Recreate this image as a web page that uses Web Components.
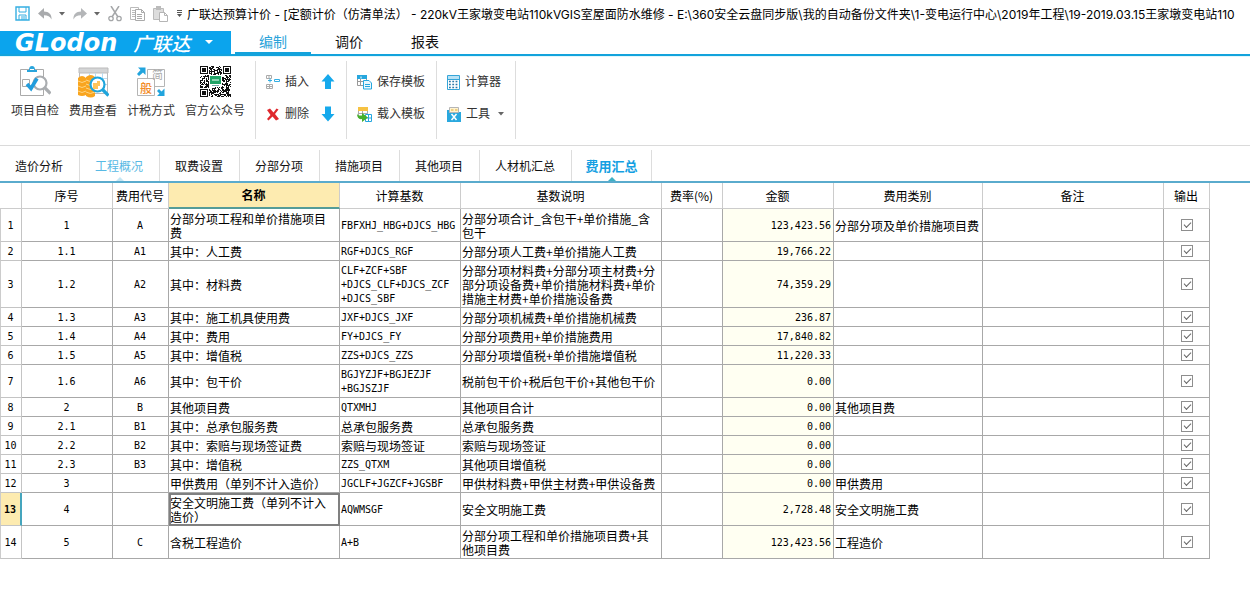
<!DOCTYPE html>
<html lang="zh-CN">
<head>
<meta charset="utf-8">
<title>广联达预算计价</title>
<style>
html,body{margin:0;background:#fff}
body{font:12px/14px "Open Sans","Noto Sans CJK SC",sans-serif;color:#111;overflow-x:hidden}
</style>
</head>
<body>
<gc-app></gc-app>
<script>
const ICONS = {
save:[15,15,`<path d="M1 1h13v13H1z" fill="none" stroke="#35aee2" stroke-width="1.4"/><path d="M4 1v5h7V1M4 14V9h7v5M6 11h4M6 13h4" fill="none" stroke="#35aee2"/>`],
undo:[14,12,`<path d="M6 0v3.500c5 0 8 3 7.500 8C12 8.500 10 7.300 6 7.300v3.500L0 5.400z" fill="#a9abad"/>`],
redo:[14,12,`<path d="M8 0v3.500C3 3.500 0 6.500.5 11.500 2 8.500 4 7.300 8 7.300v3.500l6-5.400z" fill="#b4b6b8"/>`],
caret:[6,4,`<path d="M0 0h6L3 3.500z" fill="#666"/>`],
more:[7,8,`<path d="M1 .5h5M1 2.500h5" stroke="#555"/><path d="M1 4h5L3.500 7z" fill="#555"/>`],
wcaret:[8,5,`<path d="M0 0h8L4 4z" fill="#fff"/>`],
cut:[14,16,`<path d="M3 0l7 11M11 0L4 11" stroke="#a5a7a9" stroke-width="1.500"/><circle cx="3" cy="12.500" r="2.200" fill="none" stroke="#a5a7a9" stroke-width="1.300"/><circle cx="11" cy="12.500" r="2.200" fill="none" stroke="#a5a7a9" stroke-width="1.300"/>`],
copy:[15,14,`<path d="M8.500 2.500V.5h-8v12h5" fill="none" stroke="#bbb"/><path d="M2 3.500h3M2 5.500h3M2 7.500h3M2 9.500h3" stroke="#bbb"/><path d="M5.500 2.500h6l3 3v8h-9z" fill="#fff" stroke="#aaa"/><path d="M11.500 2.500v3h3M7 7.500h5M7 9.500h5M7 11.500h5" fill="none" stroke="#aaa"/>`],
paste:[15,16,`<path d="M.5 2.500h10v11H.5z" fill="#ddd" stroke="#bbb"/><path d="M3 0h5v4H3z" fill="#bbb"/><path d="M6.500 6.500h5l3 3v6h-8z" fill="#fff" stroke="#b5b5b5"/><path d="M11.500 6.500v3h3" fill="none" stroke="#b5b5b5"/>`],
check:[32,32,`<path d="M1.500 3.500h23v26h-23z" fill="#fff" stroke="#aaa"/><path d="M8 4h2q0-4 3-4t3 4h2v2H8z" fill="#2aa5dc"/><path d="M11 3.500h4" stroke="#fff"/><path d="M3.500 13.500h7v7h-7z" fill="none" stroke="#aaa"/><circle cx="21" cy="17" r="6.500" fill="#fff" stroke="#aaadb0" stroke-width="2.200"/><path d="M25.500 21.500l6 6" stroke="#aaadb0" stroke-width="3.200"/><path d="M8 18l4 4.500 6-10" fill="none" stroke="#219ddd" stroke-width="3.600"/>`],
fee:[32,32,`<path d="M2.500 2.500h28v25h-28z" fill="#fff" stroke="#bbb"/><path d="M2 2h29v5H2z" fill="#d4d5d6" stroke="#bbb"/><path d="M3 12.500h27M3 18.500h27M12.500 7v17M18.500 7v17M25.500 7v17" stroke="#bbdcf0"/><path d="M1 12q4-4 8 0v17q-4 2-8 0z" fill="#f9a51f"/><path d="M9 11q5-4 9 0v19q-4 3-9 0z" fill="#f9a51f"/><path d="M1 15q4 3 8 0M1 20q4 3 8 0M1 25q4 3 8 0M9 14q4 3 9 0M9 18q4 3 9 0M9 22q4 3 9 0M9 26q4 3 9 0" fill="none" stroke="#ffd584"/><circle cx="20.500" cy="18.500" r="7" fill="#fff" stroke="#1ea5dc" stroke-width="2.200"/><path d="M16 17h4v-2h3v5h-2v3h-5z" fill="#ffc45a"/><path d="M25.500 23.500l6 6" stroke="#1ea5dc" stroke-width="3.200"/>`],
tax:[32,32,`<path d="M12.500 3.500h17v17h-17z" fill="#fff" stroke="#b5b5b5"/><path d="M2.500 12.500h17v17h-17z" fill="#fff" stroke="#b5b5b5"/><text x="17" y="13" font-size="11" fill="#aaa">简</text><text x="5" y="27" font-size="12" font-weight="500" fill="#f28c28">般</text><path d="M3 1.500h7.500V9L8 6.500 4 10 2 8l3.500-4zM29.500 30H22l2.500-2.500L22 25l2-2 2.500 2.500 3-3z" fill="#21a4dd"/>`],
qr:[31,32,''],
insert:[14,14,`<path d="M.5.5h5v3h-5zM3 .5v3M.5 9.500h6v4h-6zM3.500 9.500v4M.5 11.500h6" fill="none" stroke="#aaa"/><path d="M8.500 4.500h5v2h-5z" fill="none" stroke="#35aee2"/><path d="M2 5.500h4M4 3.500v4" stroke="#35aee2"/>`],
del:[14,13,`<path d="M1 2l3-1.500 3.500 4 3-4 2 1-3.500 4.500 4 5-3 1.500-3.500-4-4 4-1.500-1.500L4.500 7z" fill="#df282d"/>`],
up:[14,16,`<path d="M7 0l6.500 7.500H10V15H4V7.500H.5z" fill="#16a9ec"/>`],
down:[14,16,`<path d="M7 15.500l6.500-7.500H10V.5H4V8H.5z" fill="#16a9ec"/>`],
tsave:[15,15,`<path d="M.5.5h9v10h-9zM3.500 1v9.500M.5 6.500h9" fill="#fff" stroke="#999"/><path d="M0 0h10v4H0z" fill="#26a7de"/><path d="M4 1.500v2" stroke="#fff"/><path d="M6.500 5.500h5.500l2.500 2.500v6h-8z" fill="#eaf7fd" stroke="#26a7de"/><path d="M8 9.500h5M8 11.500h5" stroke="#26a7de"/>`],
tload:[15,15,`<path d="M1.500.5h9v10h-9zM5.500 1v9.500M1.500 6.500h9" fill="#fff" stroke="#aaa"/><path d="M1 0h10v4H1z" fill="#f6c243"/><path d="M8.500 7.500h6v7h-6zM8.500 11h6M11.500 8v6" fill="#fff" stroke="#26a7de"/><path d="M0 6q0 3 5 2.500V6l6 4.500-6 4.500v-3Q0 13 0 6z" fill="#45b02b"/>`],
calc:[13,15,`<path d="M.5.5h12v14H.5z" fill="#fff" stroke="#35a5d8"/><path d="M1 1h11v3H1z" fill="#b9e2f5"/><path d="M1 4.500h11" stroke="#35a5d8"/><path d="M2 6.500h9M2 9.500h9M2 12.500h9" stroke="#2b78a8" stroke-width="1.300" stroke-dasharray="1.800 1.500"/>`],
tools:[14,15,`<path d="M0 3h2v2h12v10H0z" fill="#2aa8de"/><path d="M2.500.5h9v5h-9z" fill="#fff3cf" stroke="#b5b5b5"/><path d="M4 3h2.500M8 3h2.500" stroke="#d9a93a"/><path d="M4.500 7l5 6M9.500 7l-5 6" stroke="#fff" stroke-width="1.500"/>`]
};
/* QR code: three finder squares, scattered modules, green badge in the centre */
ICONS.qr[2] = (() => {
  let d = '', s = 7;
  const n = 31, finder = (x, y) => (x < 9 && y < 9) || (x > 21 && y < 9) || (x < 9 && y > 21);
  for (let y = 0; y < n; y++) for (let x = 0; x < n; x++) {
    s = (s * 1103515245 + 12345) % 2147483648;
    if (!finder(x, y) && (s >> 16) % 100 < 58) d += `M${x} ${y}h1v1h-1z`;
  }
  const f = (x, y) => `<path d="M${x} ${y}h8v8h-8z" fill="#111"/><path d="M${x+1} ${y+1}h6v6h-6z" fill="#fff"/><path d="M${x+2} ${y+2}h4v4h-4z" fill="#111"/>`;
  return `<g shape-rendering="crispEdges"><path d="${d}" fill="#111"/>${f(0,0)}${f(23,0)}${f(0,23)}<path d="M9 9h13v12H9z" fill="#fff"/><path d="M10 10h11v8H10z" fill="#20a366"/><path d="M12 13h7v2h-7z" fill="#8bd3b0"/><path d="M12 19h7v1h-7z" fill="#7aa"/></g>`;
})();

const mkIcon = (name) => { const i = document.createElement('gc-icon'); i.setAttribute('name', name); return i; };

const define = (name, html, setup) => customElements.define(name, class extends HTMLElement {
  constructor() {
    super();
    const t = document.createElement('template');
    t.innerHTML = html;
    this.attachShadow({ mode: 'open' }).append(t.content.cloneNode(true));
  }
  connectedCallback() { if (setup && !this.ready) { this.ready = true; setup(this, this.shadowRoot); } }
});

define('gc-icon', `<style>:host{display:inline-flex;flex:none}svg{display:block;font-family:"Noto Sans CJK SC",sans-serif}</style><span></span>`, (el, r) => {
  const [w, h, body] = ICONS[el.getAttribute('name')];
  r.querySelector('span').innerHTML = `<svg width="${w}" height="${h}" viewBox="0 0 ${w} ${h}" aria-hidden="true">${body}</svg>`;
});

const RESET = `button{all:unset;box-sizing:border-box;display:flex;align-items:center;cursor:default;white-space:nowrap}button:focus-visible{outline:1px dotted #16a9ec}`;

define('gc-titlebar', `<style>${RESET}
:host{display:flex;align-items:center;height:30px;box-sizing:border-box;padding:0 0 3px 15px;overflow:hidden}
.tools{display:flex;align-items:center;gap:8px;flex:none}
.split{gap:7px}
h1{font:12px/18px Inter,"Noto Sans CJK SC",sans-serif;color:#000;margin:2px 0 0 4px;white-space:nowrap}
</style>
<div class="tools">
<button aria-label="保存"><gc-icon name="save"></gc-icon></button>
<button class="split" aria-label="撤销"><gc-icon name="undo"></gc-icon><gc-icon name="caret"></gc-icon></button>
<button class="split" aria-label="恢复"><gc-icon name="redo"></gc-icon><gc-icon name="caret"></gc-icon></button>
<button aria-label="剪切"><gc-icon name="cut"></gc-icon></button>
<button aria-label="复制"><gc-icon name="copy"></gc-icon></button>
<button aria-label="粘贴"><gc-icon name="paste"></gc-icon></button>
<button aria-label="更多"><gc-icon name="more"></gc-icon></button>
</div><h1><slot></slot></h1>`);

define('gc-brand', `<style>${RESET}
:host{display:block;flex:none;background:#0ba4ed;color:#fff}
button{width:231px;height:23px;padding:0 18px 0 15px}
b{font:italic bold 24px/23px "DejaVu Sans",sans-serif;padding-top:2px}
span{font:italic 500 19px/23px "Noto Sans CJK SC",sans-serif;margin-left:16px}
gc-icon{margin-left:auto}
</style><button aria-label="Glodon 广联达 菜单"><b>GLodon</b><span>广联达</span><gc-icon name="wcaret"></gc-icon></button>`);

define('gc-menubar', `<style>${RESET}
:host{display:flex;padding-top:1px;border-bottom:2px solid #13a3dc}
nav{display:flex;margin-left:4px}
nav button{width:76px;height:23px;justify-content:center;font-size:14px;line-height:20px;border-bottom:2px solid transparent}
button[aria-current]{color:#2aa3da;border-color:#13a3dc}
</style><gc-brand></gc-brand><nav><button aria-current="page">编制</button><button>调价</button><button>报表</button></nav>`);

define('gc-bigbutton', `<style>${RESET}
:host{display:block}
button{flex-direction:column;gap:4px;padding:0 5px;color:#333}
span{line-height:18px}
</style><button><span><slot></slot></span></button>`, (el, r) => {
  r.querySelector('button').prepend(mkIcon(el.getAttribute('icon')));
});

define('gc-smallbutton', `<style>${RESET}
:host{display:block}
button{height:18px;color:#333;gap:5px;line-height:18px}
.menu{margin-left:3px}
</style><button></button>`, (el, r) => {
  const b = r.querySelector('button');
  b.append(mkIcon(el.getAttribute('icon')));
  if (el.hasAttribute('label')) b.setAttribute('aria-label', el.getAttribute('label'));
  else { const s = document.createElement('span'); s.append(document.createElement('slot')); b.append(s); }
  if (el.hasAttribute('menu')) { const c = mkIcon('caret'); c.className = 'menu'; b.append(c); }
});

define('gc-group', `<style>
:host{display:grid;grid-auto-flow:column;grid-template-rows:18px 18px;row-gap:14px;column-gap:12px;align-content:start;padding:12px 11px 16px 10px;border-right:1px solid #ddd}
:host([large]){display:flex;gap:0;padding:5px 5px 0 6px}
</style><slot></slot>`);

define('gc-ribbon', `<style>
:host{display:flex;padding:4px 0 6px;border-bottom:1px solid #dadada;border-top:1px solid #e0f8fd}
</style>
<gc-group large>
<gc-bigbutton icon="check">项目自检</gc-bigbutton><gc-bigbutton icon="fee">费用查看</gc-bigbutton><gc-bigbutton icon="tax">计税方式</gc-bigbutton><gc-bigbutton icon="qr">官方公众号</gc-bigbutton>
</gc-group>
<gc-group>
<gc-smallbutton icon="insert">插入</gc-smallbutton><gc-smallbutton icon="del">删除</gc-smallbutton>
<gc-smallbutton icon="up" label="上移"></gc-smallbutton><gc-smallbutton icon="down" label="下移"></gc-smallbutton>
</gc-group>
<gc-group><gc-smallbutton icon="tsave">保存模板</gc-smallbutton><gc-smallbutton icon="tload">载入模板</gc-smallbutton></gc-group>
<gc-group><gc-smallbutton icon="calc">计算器</gc-smallbutton><gc-smallbutton icon="tools" menu>工具</gc-smallbutton></gc-group>`);

define('gc-tabs', `<style>${RESET}
:host{display:flex;padding-top:4px;border-bottom:2px solid #5aabcd}
button{position:relative;min-width:80px;height:31px;justify-content:center;padding:2px 16px 0 15px;border-right:1px solid #ddd;line-height:18px}
button.hover{color:#58b9e4}
button[aria-selected=true]{color:#159fe2;font-weight:bold;font-size:13px;padding:0 13px}
button.hover::after,button[aria-selected=true]::after{content:"";position:absolute;bottom:0;left:50%;margin-left:-4px;border:4px solid transparent;border-top:0;border-bottom-color:#3fb0c4}
button.hover::after{border-bottom-color:#c4e6f4}
</style>`, (el, r) => {
  el.setAttribute('role', 'tablist');
  ['造价分析','工程概况','取费设置','分部分项','措施项目','其他项目','人材机汇总','费用汇总'].forEach((t, i) => {
    const b = document.createElement('button');
    b.setAttribute('role', 'tab'); b.setAttribute('aria-selected', i === 7);
    if (i === 1) b.className = 'hover';
    b.textContent = t; r.append(b);
  });
});

const ROWS = [
['1','A','分部分项工程和单价措施项目费','FBFXHJ_HBG+DJCS_HBG','分部分项合计_含包干+单价措施_含包干','123,423.56','分部分项及单价措施项目费'],
['1.1','A1','其中：人工费','RGF+DJCS_RGF','分部分项人工费+单价措施人工费','19,766.22',''],
['1.2','A2','其中：材料费','CLF+ZCF+SBF<br>+DJCS_CLF+DJCS_ZCF<br>+DJCS_SBF','分部分项材料费+分部分项主材费+分部分项设备费+单价措施材料费+单价措施主材费+单价措施设备费','74,359.29',''],
['1.3','A3','其中：施工机具使用费','JXF+DJCS_JXF','分部分项机械费+单价措施机械费','236.87',''],
['1.4','A4','其中：费用','FY+DJCS_FY','分部分项费用+单价措施费用','17,840.82',''],
['1.5','A5','其中：增值税','ZZS+DJCS_ZZS','分部分项增值税+单价措施增值税','11,220.33',''],
['1.6','A6','其中：包干价','BGJYZJF+BGJEZJF<br>+BGJSZJF','税前包干价+税后包干价+其他包干价','0.00',''],
['2','B','其他项目费','QTXMHJ','其他项目合计','0.00','其他项目费'],
['2.1','B1','其中：总承包服务费','总承包服务费','总承包服务费','0.00',''],
['2.2','B2','其中：索赔与现场签证费','索赔与现场签证','索赔与现场签证','0.00',''],
['2.3','B3','其中：增值税','ZZS_QTXM','其他项目增值税','0.00',''],
['3','','甲供费用（单列不计入造价）','JGCLF+JGZCF+JGSBF','甲供材料费+甲供主材费+甲供设备费','0.00','甲供费用'],
['4','','安全文明施工费（单列不计入造价）','AQWMSGF','安全文明施工费','2,728.48','安全文明施工费'],
['5','C','含税工程造价','A+B','分部分项工程和单价措施项目费+其他项目费','123,423.56','工程造价']];

define('gc-costtable', `<style>
:host{display:block;overflow:hidden;font-family:"Noto Sans CJK SC",sans-serif;color:#000}
table{table-layout:fixed;border-collapse:separate;border-spacing:0;width:1210px}
th,td{box-sizing:border-box;padding:3px 2px 1px 1px;border:0 solid #a8a8a8;border-width:0 1px 1px 0;font-size:12px;line-height:14px;text-align:left;font-weight:normal;overflow:hidden}
thead th{height:26px;text-align:center;border-color:#ccc;padding:2px 2px 2px 1px}
thead th.cur{background:#fdebb0;font-weight:bold;border-bottom:2px solid #549c98}
tbody th{text-align:center;border-color:#c4c4c4;border-left:1px solid #ccc;padding:3px 1px 1px 0}
.m{font-family:"DejaVu Sans Mono","Noto Sans CJK SC",monospace;font-size:10px}
.c{text-align:center}
.n{text-align:right;background:#fffff2}
tr.sel th{background:#fdebb0;font-weight:bold;border-right:2px solid #45a5bd}
tr.sel td.name{outline:2px solid #808080;outline-offset:-2px}
input{appearance:none;box-sizing:border-box;display:block;margin:0 auto;width:12px;height:12px;border:1px solid #8e8e8e;background:#fff}
td:last-child{padding:2px}
input:checked::after{content:"";display:block;box-sizing:border-box;width:7px;height:4px;margin:2px 0 0 2px;border:solid #666;border-width:0 0 1px 1px;transform:rotate(-45deg)}
</style>
<table aria-label="费用汇总"><colgroup></colgroup><thead><tr></tr></thead><tbody></tbody></table>`, (el, r) => {
  r.querySelector('colgroup').innerHTML = [22,91,56,171,121,201,61,111,149,181,46].map(w => `<col style="width:${w}px">`).join('');
  r.querySelector('thead tr').innerHTML = ['','序号','费用代号','名称','计算基数','基数说明','费率(%)','金额','费用类别','备注','输出']
    .map((h, i) => `<th scope="col"${i === 3 ? ' class="cur"' : ''}>${h}</th>`).join('');
  r.querySelector('tbody').innerHTML = ROWS.map(([no, code, name, base, desc, sum, kind], i) =>
    `<tr${i === 12 ? ' class="sel"' : ''}><th scope="row" class="m">${i + 1}</th><td class="m c">${no}</td><td class="m c">${code}</td><td class="name">${name}</td><td${/^[A-Z]/.test(base) ? ' class="m"' : ''}>${base}</td><td>${desc}</td><td></td><td class="m n">${sum}</td><td>${kind}</td><td></td><td><input type="checkbox" checked aria-label="输出第${i + 1}行"></td></tr>`).join('');
});

define('gc-app', `<style>:host{display:block}</style>
<gc-titlebar>广联达预算计价 - [定额计价（仿清单法） - 220kV王家墩变电站110kVGIS室屋面防水维修 - E:\\360安全云盘同步版\\我的自动备份文件夹\\1-变电运行中心\\2019年工程\\19-2019.03.15王家墩变电站110</gc-titlebar>
<gc-menubar></gc-menubar><gc-ribbon></gc-ribbon><gc-tabs></gc-tabs><gc-costtable></gc-costtable>`);
</script>
</body>
</html>
